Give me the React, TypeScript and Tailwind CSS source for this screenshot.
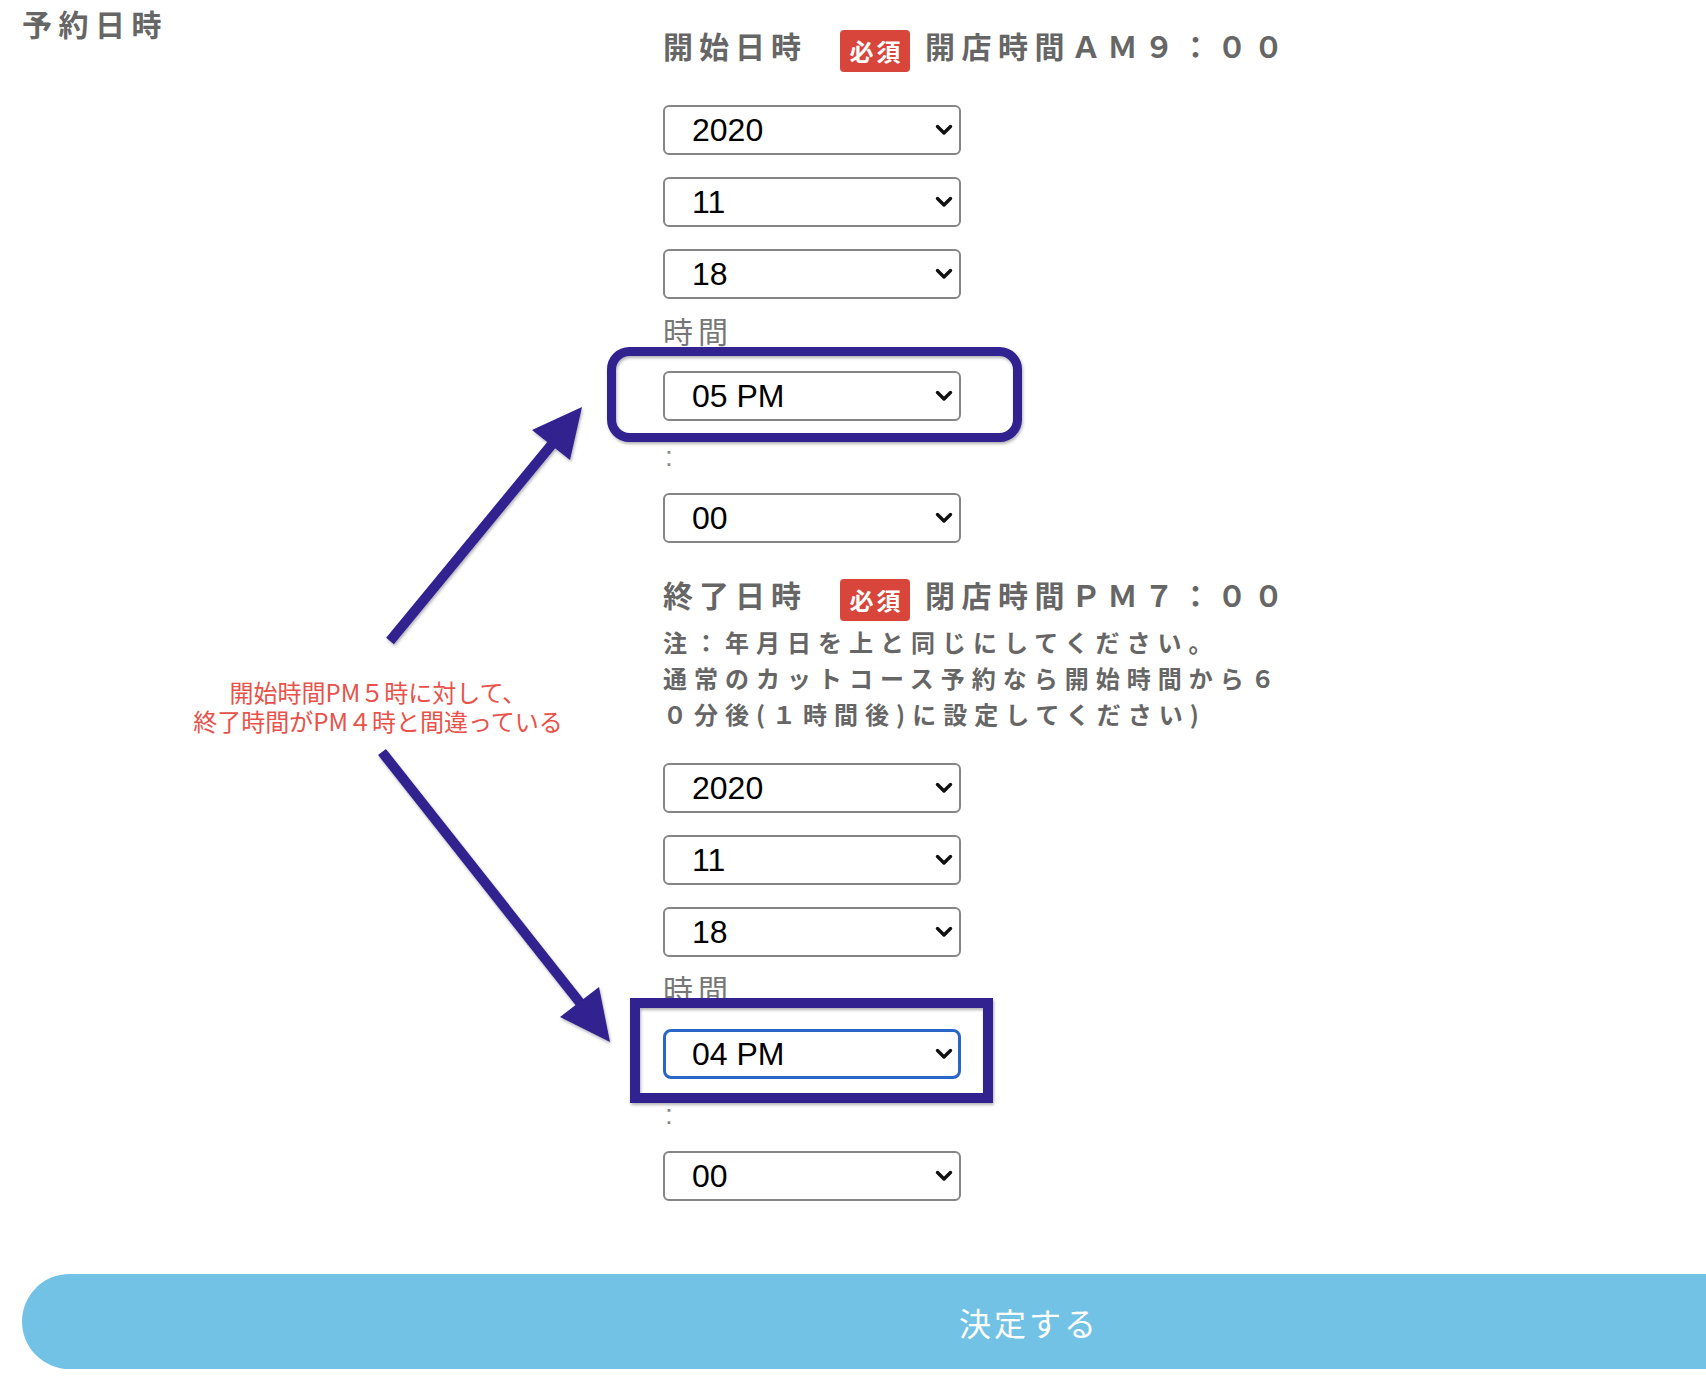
import React from "react";

const JP = "font-['Noto_Sans_CJK_JP','Noto_Sans_CJK_SC',sans-serif]";

function Chevron() {
  return (
    <svg width="18" height="12" viewBox="0 0 18 12" className="shrink-0">
      <polyline
        points="2.5,2.5 9,9 15.5,2.5"
        fill="none"
        stroke="#111"
        strokeWidth="3.4"
        strokeLinecap="round"
        strokeLinejoin="round"
      />
    </svg>
  );
}

function Sel({ v, focus = false, className = "" }: { v: string; focus?: boolean; className?: string }) {
  const base = focus
    ? "border-[3px] border-[#2a66c8] rounded-[8px] pl-[26px] pr-[5px]"
    : "border-2 border-[#858585] rounded-[6px] pl-[27px] pr-[6px]";
  return (
    <div className={`flex h-[50px] w-[298px] items-center justify-between bg-white ${base} ${className}`}>
      <span className="font-['Liberation_Sans',Arial,sans-serif] text-[32px] leading-none text-black">{v}</span>
      <Chevron />
    </div>
  );
}

function DateGroup({ hour, focus = false }: { hour: string; focus?: boolean }) {
  return (
    <>
      <Sel v="2020" />
      <Sel v="11" className="mt-[22px]" />
      <Sel v="18" className="mt-[22px]" />
      <div className="mt-[13px] h-[36px] text-[30px] font-normal leading-[36px] tracking-[5px] text-[#777]">時間</div>
      <Sel v={hour} focus={focus} className="mt-[23px]" />
      <div className="flex h-[72px] items-center pl-[2px] font-['Liberation_Sans',Arial,sans-serif] text-[28px] leading-none text-[#888]">
        :
      </div>
      <Sel v="00" />
    </>
  );
}

function Header({ title, note, className = "" }: { title: string; note: string; className?: string }) {
  return (
    <div className={`flex h-[42px] items-start whitespace-nowrap ${className}`}>
      <span className="text-[30px] font-bold leading-[30px] tracking-[6px] text-[#666]">{title}</span>
      <span className="ml-[33px] flex h-[42px] w-[70px] items-center justify-center rounded-[4px] bg-[#d8463b] pl-[3px] text-[24px] font-bold leading-none tracking-[3px] text-white">
        必須
      </span>
      <span className="ml-[15px] text-[30px] font-bold leading-[30px] tracking-[6.5px] text-[#666]">{note}</span>
    </div>
  );
}

function Overlay() {
  return (
    <svg
      className="pointer-events-none absolute left-0 top-0"
      width="1706"
      height="1380"
      viewBox="0 0 1706 1380"
    >
      <defs>
        <filter id="sh" x="-20%" y="-20%" width="140%" height="140%">
          <feDropShadow dx="1" dy="2" stdDeviation="1.5" floodColor="#000" floodOpacity="0.3" />
        </filter>
      </defs>
      <g filter="url(#sh)" fill="#30208f" stroke="none">
        <line x1="390" y1="641" x2="553" y2="443" stroke="#30208f" strokeWidth="10" />
        <polygon points="582,407 532,430 570,460" />
        <line x1="382" y1="752" x2="581" y2="1004" stroke="#30208f" strokeWidth="10" />
        <polygon points="610,1042 560,1017 599,987" />
      </g>
      <g filter="url(#sh)" fill="none" stroke="#30208f">
        <rect x="611.5" y="351.5" width="406" height="86" rx="18" strokeWidth="9" />
        <rect x="635" y="1003" width="353" height="95" strokeWidth="10" />
      </g>
    </svg>
  );
}

export default function App() {
  return (
    <div className={`relative min-h-[1380px] w-full overflow-hidden bg-white ${JP}`}>
      <div className="flex pl-[22px]">
        <div className="w-[641px] shrink-0 pt-[8px] text-[30px] font-bold leading-[30px] tracking-[6.5px] text-[#666]">
          予約日時
        </div>
        <div className="flex flex-col pt-[30px]">
          <Header title="開始日時" note="開店時間ＡＭ９：００" />
          <div className="mt-[33px] flex flex-col">
            <DateGroup hour="05 PM" />
          </div>
          <Header title="終了日時" note="閉店時間ＰＭ７：００" className="mt-[36px]" />
          <div className="mt-[3px] whitespace-nowrap text-[24px] font-bold leading-[36px] tracking-[7px] text-[#666]">
            <div>注：年月日を上と同じにしてください。</div>
            <div>通常のカットコース予約なら開始時間から６</div>
            <div>０分後(１時間後)に設定してください)</div>
          </div>
          <div className="mt-[31px] flex flex-col">
            <DateGroup hour="04 PM" focus />
          </div>
        </div>
      </div>
      <div className="mt-[73px] pl-[22px]">
        <button className="flex h-[95px] w-[2014px] items-center justify-center rounded-full bg-[#72c2e6] text-[32px] font-normal tracking-[3px] text-white">
          決定する
        </button>
      </div>

      <div className="absolute left-[178px] top-[677px] w-[400px] text-center text-[24px] font-normal leading-[29px] text-[#e8524a]">
        <div>開始時間PM５時に対して、</div>
        <div>終了時間がPM４時と間違っている</div>
      </div>

      <Overlay />
    </div>
  );
}
